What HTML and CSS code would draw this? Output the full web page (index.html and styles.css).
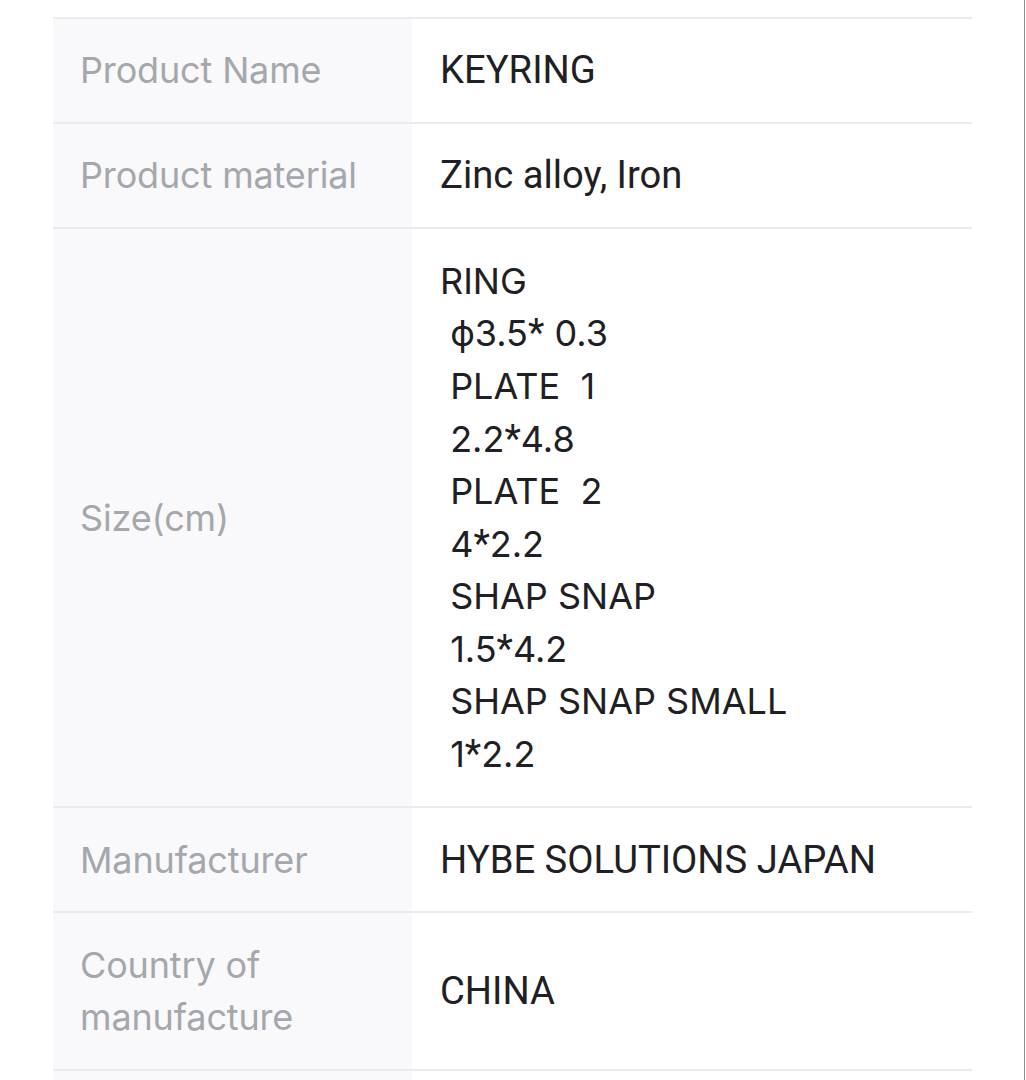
FILE: index.html
```html
<!DOCTYPE html>
<html lang="en">
<head>
<meta charset="utf-8">
<title>Product details</title>
<link rel="stylesheet" href="styles.css">
</head>
<body>
<div class="page">
  <div class="spec-table">
    <div class="spec-row">
      <div class="spec-label">Product Name</div>
      <div class="spec-value">KEYRING</div>
    </div>
    <div class="spec-row">
      <div class="spec-label">Product material</div>
      <div class="spec-value">Zinc alloy, Iron</div>
    </div>
    <div class="spec-row">
      <div class="spec-label">Size(cm)</div>
      <div class="spec-value spec-value-size"><div class="size-line">RING</div><div class="size-line"> ϕ3.5<span class="ast">*</span> 0.3</div><div class="size-line"> PLATE  1</div><div class="size-line"> 2.2<span class="ast">*</span>4.8</div><div class="size-line"> PLATE  2</div><div class="size-line"> 4<span class="ast">*</span>2.2</div><div class="size-line"> SHAP SNAP</div><div class="size-line"> 1.5<span class="ast">*</span>4.2</div><div class="size-line"> SHAP SNAP SMALL</div><div class="size-line"> 1<span class="ast">*</span>2.2</div></div>
    </div>
    <div class="spec-row">
      <div class="spec-label">Manufacturer</div>
      <div class="spec-value">HYBE SOLUTIONS JAPAN</div>
    </div>
    <div class="spec-row">
      <div class="spec-label">Country of<br>manufacture</div>
      <div class="spec-value">CHINA</div>
    </div>
    <div class="spec-row">
      <div class="spec-label">&nbsp;</div>
      <div class="spec-value">&nbsp;</div>
    </div>
  </div>
</div>
</body>
</html>
```
FILE: styles.css
```css
html, body {
  margin: 0;
  padding: 0;
  background: #ffffff;
}

body {
  overflow: hidden;
}

.page {
  width: 1025px;
  height: 1080px;
  border-right: 1px solid #8e8e90;
  overflow: hidden;
  padding-top: 16.5px;
  box-sizing: border-box;
}

.spec-table {
  margin-left: 53px;
  width: 919px;
}

.spec-row {
  display: flex;
  border-top: 2px solid #ebebed;
}

.spec-label {
  width: 359px;
  flex: none;
  box-sizing: border-box;
  background: #f9f9fb;
  padding: 25.6px 20px 25.6px 27px;
  display: flex;
  align-items: center;
  font-family: Inter, "Noto Sans", sans-serif;
  font-size: 36px;
  line-height: 52.2px;
  color: #a4a7ac;
  letter-spacing: -0.15px;
}

.spec-value {
  flex: 1;
  min-width: 0;
  padding: 25.6px 20px 25.6px 28px;
  display: flex;
  align-items: center;
  font-family: Roboto, "Liberation Sans", sans-serif;
  font-size: 38.2px;
  line-height: 52.2px;
  color: #1f2023;
}

.spec-value-size {
  display: block;
  font-family: Inter, "Noto Sans CJK JP", sans-serif;
  font-size: 36px;
  line-height: 52.55px;
}

.size-line {
  white-space: pre;
}

.ast {
  font-family: Roboto, "Liberation Sans", sans-serif;
  font-size: 38px;
}
```
